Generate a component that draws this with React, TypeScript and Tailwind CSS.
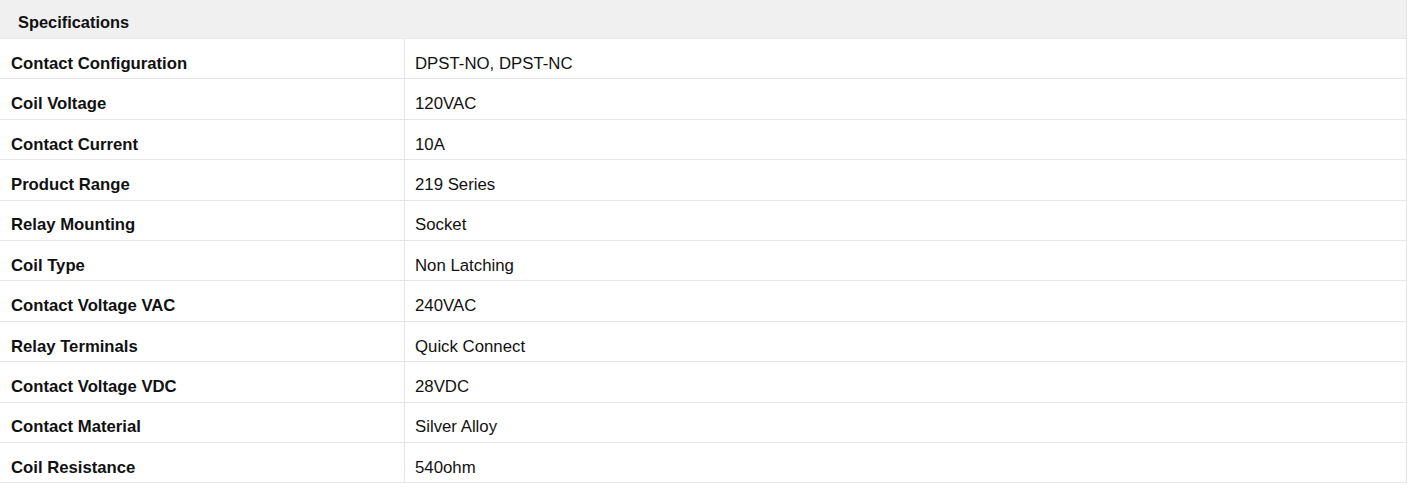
import React from "react";

const rows: [string, string][] = [
  ["Contact Configuration", "DPST-NO, DPST-NC"],
  ["Coil Voltage", "120VAC"],
  ["Contact Current", "10A"],
  ["Product Range", "219 Series"],
  ["Relay Mounting", "Socket"],
  ["Coil Type", "Non Latching"],
  ["Contact Voltage VAC", "240VAC"],
  ["Relay Terminals", "Quick Connect"],
  ["Contact Voltage VDC", "28VDC"],
  ["Contact Material", "Silver Alloy"],
  ["Coil Resistance", "540ohm"],
];

export default function App() {
  return (
    <div className="w-[1408px] h-[488px] bg-white text-[#111] font-['Liberation_Sans',Arial,sans-serif]">
      <div className="w-[1407px] border-r border-[#e6e6e6]">
        <div className="h-[39px] bg-[#f0f0f0] border-b border-[#e9e9e9] flex items-center pl-[18px] pt-[6px] text-[16.4px] leading-none font-bold">
          Specifications
        </div>
        {rows.map(([k, v]) => (
          <div key={k} className="grid grid-cols-[405px_1fr] h-[40.4px] border-b border-[#e6e6e6]">
            <div className="border-r border-[#e6e6e6] flex items-center pl-[11px] pt-[11px] text-[16.7px] leading-none font-bold">
              {k}
            </div>
            <div className="flex items-center pl-[10px] pt-[11px] text-[16.8px] leading-none">{v}</div>
          </div>
        ))}
      </div>
    </div>
  );
}
